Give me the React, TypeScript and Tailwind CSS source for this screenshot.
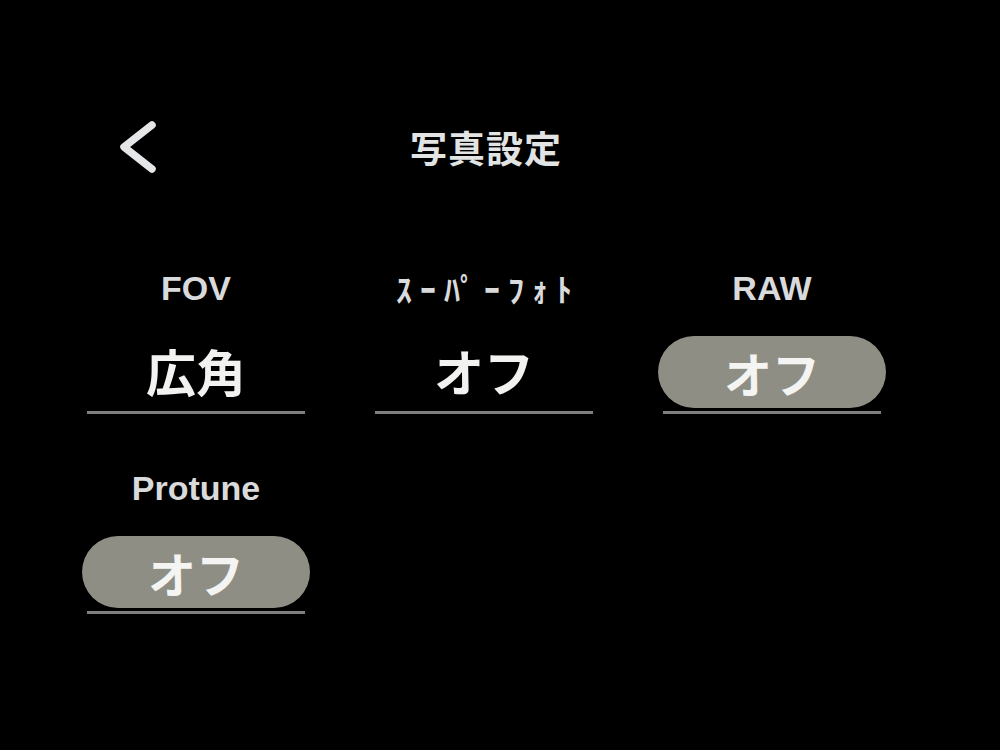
const jp = { fontFamily: '"Noto Sans CJK JP", "Noto Sans", sans-serif' };
const latin = { fontFamily: '"Liberation Sans", "Noto Sans CJK JP", sans-serif' };

type Setting = {
  label: string;
  value: string;
  pill: boolean;
  narrow?: boolean;
};

const rows: Setting[][] = [
  [
    { label: "FOV", value: "広角", pill: false },
    { label: "ｽｰﾊﾟｰﾌｫﾄ", value: "オフ", pill: false, narrow: true },
    { label: "RAW", value: "オフ", pill: true },
  ],
  [{ label: "Protune", value: "オフ", pill: true }],
];

function BackChevron() {
  return (
    <svg width="44" height="56" viewBox="0 0 44 56" fill="none">
      <path
        d="M34 5 L6 27 L34 49"
        stroke="#e4e6e8"
        strokeWidth="7.5"
        strokeLinecap="round"
        strokeLinejoin="round"
      />
    </svg>
  );
}

function SettingCell({ s }: { s: Setting }) {
  return (
    <div className="flex flex-col items-center">
      {s.narrow ? (
        <div
          className="h-[34px] text-[32px] leading-[34px] font-bold text-[#d9dadb] tracking-[8px] pl-[8px]"
          style={jp}
        >
          {s.label}
        </div>
      ) : (
        <div
          className="h-[34px] text-[34px] leading-[34px] font-bold text-[#d9dadb]"
          style={latin}
        >
          {s.label}
        </div>
      )}
      <div className="mt-[31px] h-[72px] w-[228px] flex items-center justify-center">
        {s.pill ? (
          <div
            className="h-[72px] w-[228px] rounded-full bg-[#8f8e85] flex items-center justify-center text-[48px] font-bold text-[#f4f4f2]"
            style={jp}
          >
            {s.value}
          </div>
        ) : (
          <div className="text-[50px] font-bold text-[#f2f2f0] leading-none -mt-[4px]" style={jp}>
            {s.value}
          </div>
        )}
      </div>
      <div className="mt-[3px] h-[3px] w-[218px] bg-[#7e8080]" />
    </div>
  );
}

export default function App() {
  return (
    <div className="w-[1000px] h-[750px] bg-black overflow-hidden pl-[52px] pt-[120px]">
      {/* header */}
      <div className="grid grid-cols-[288px_288px_288px] h-[54px] items-center">
        <div className="pl-[66px] flex items-center">
          <BackChevron />
        </div>
        <div
          className="text-center text-[37px] font-bold text-[#e2e4e4] tracking-[1px] pl-[4px]"
          style={jp}
        >
          写真設定
        </div>
        <div />
      </div>

      {/* settings grid */}
      <div className="mt-[97px] flex flex-col gap-[57px]">
        {rows.map((row, i) => (
          <div key={i} className="grid grid-cols-[288px_288px_288px]">
            {row.map((s) => (
              <SettingCell key={s.label} s={s} />
            ))}
          </div>
        ))}
      </div>
    </div>
  );
}
